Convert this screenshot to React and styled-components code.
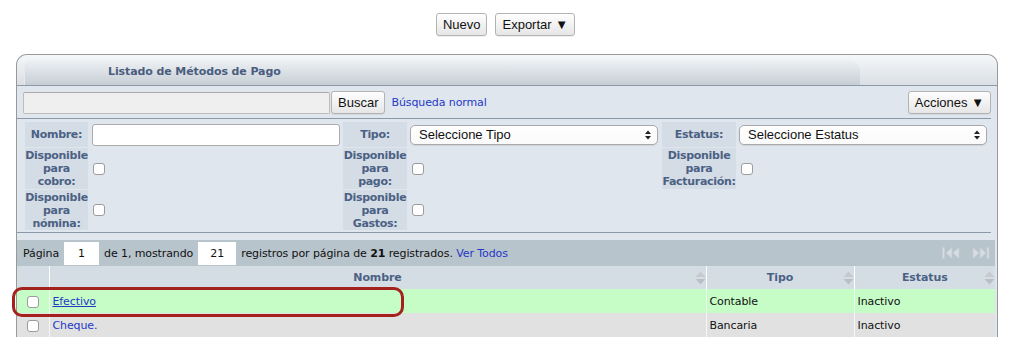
import React from 'react';
import styled, { createGlobalStyle } from 'styled-components';

const Global = createGlobalStyle`
  html, body { margin: 0; padding: 0; background: #fff; }
  body { font-family: "DejaVu Sans", Verdana, sans-serif; font-size: 11px; color: #111; letter-spacing: -0.1px; }
  * { box-sizing: border-box; }
`;

const TopBar = styled.div`
  display: flex;
  justify-content: center;
  gap: 8px;
  padding-top: 13px;
`;

const Btn = styled.button`
  font-family: "Liberation Sans", Arial, sans-serif;
  font-size: 13px;
  letter-spacing: 0;
  color: #111;
  height: 23px;
  padding: 0 6px;
  border: 1px solid #b3b3b3;
  border-radius: 3px;
  background: linear-gradient(#fefefe, #e6e6e6);
  box-shadow: 0 1px 0 rgba(0, 0, 0, 0.06);
  line-height: 21px;
  white-space: nowrap;
  cursor: pointer;
  margin: 0;
  margin-left: ${p => (p.$push ? 'auto' : '0')};
`;

const Panel = styled.section`
  margin: 18px 13px 0 16px;
  border: 1px solid #999;
  border-bottom: none;
  border-radius: 11px 11px 0 0;
  background: #dfe6ee;
`;

const PanelHeader = styled.div`
  height: 31px;
  display: flex;
  align-items: flex-end;
  padding-left: 8px;
  border-radius: 10px 10px 0 0;
  background: linear-gradient(#f5f7f9, #dadfe4);
  border-bottom: 1px solid #8c99a7;
`;

const Tab = styled.div`
  width: 835px;
  height: 25px;
  border-radius: 7px 11px 0 0;
  background: linear-gradient(#eef1f4, #c6ced5);
  box-shadow: -1px 0 0 #e6eaee;
  padding-left: 83px;
  padding-bottom: 2px;
  display: flex;
  align-items: center;
  font-weight: bold;
  color: #4a5d7e;
`;

const SearchBar = styled.div`
  display: flex;
  align-items: center;
  margin-right: 6px;
  padding: 5px 0 4px 6px;
  border-bottom: 1px solid #8a98a8;
`;

const SearchInput = styled.input`
  width: 307px;
  height: 22px;
  border: 1px solid #bcbcbc;
  border-top-color: #a9a9a9;
  border-radius: 2px;
  background: #efefef;
  margin: 0 1px 0 0;
`;

const Link = styled.a`
  color: #2538c6;
  text-decoration: ${p => (p.$underline ? 'underline' : 'none')};
  margin-left: ${p => p.$ml || 0}px;
  cursor: pointer;
`;

const Filters = styled.div`
  display: grid;
  grid-template-columns: 63px 251px 64px 251px 74px 252px;
  grid-template-rows: 25px 41px 40px;
  gap: 1px 2px;
  padding: 3px 6px 2px 8px;
  margin-right: 6px;
  border-bottom: 1px solid #8a98a8;
`;

const Label = styled.div`
  background: #d4dce5;
  color: #4b6184;
  font-weight: bold;
  text-align: center;
  line-height: 13px;
  letter-spacing: -0.3px;
  display: flex;
  align-items: center;
  justify-content: center;
`;

const Value = styled.div`
  display: flex;
  align-items: center;
  padding-left: ${p => p.$pl ?? 2}px;
`;

const TextInput = styled.input`
  width: 248px;
  height: 22px;
  border: 1px solid #ababab;
  border-radius: 3px;
  background: #fff;
  margin: 0;
`;

const Select = styled.div`
  display: flex;
  align-items: center;
  justify-content: space-between;
  width: 248px;
  height: 20px;
  border: 1px solid #a9a9a9;
  border-radius: 5px;
  background: linear-gradient(#fff, #fafafa);
  box-shadow: 0 1px 1px rgba(0, 0, 0, 0.08);
  padding: 0 6px 0 8px;
  font-family: "Liberation Sans", Arial, sans-serif;
  font-size: 13px;
  letter-spacing: 0;
  color: #111;
`;

const Check = styled.input.attrs({ type: 'checkbox' })`
  appearance: none;
  -webkit-appearance: none;
  width: 12px;
  height: 12px;
  margin: 0 0 0 ${p => p.$ml ?? 1}px;
  border: 1px solid #9c9c9c;
  border-radius: 3px;
  background: #fff;
`;

const GridWrap = styled.div`
  position: relative;
  margin: 7px 2px 0 0;
`;

const Pager = styled.div`
  height: 26px;
  background: #b8c4cc;
  display: flex;
  align-items: center;
  gap: 5px;
  padding: 0 5px 0 6px;
  white-space: nowrap;
`;

const PageBox = styled.input`
  width: ${p => p.$w}px;
  height: 23px;
  border: none;
  background: #fff;
  text-align: center;
  font-family: "DejaVu Sans", Verdana, sans-serif;
  font-size: 11px;
  color: #111;
  margin: 0;
  padding: 0;
`;

const NavIcons = styled.div`
  margin-left: auto;
  display: flex;
  gap: 12px;
  align-items: center;
`;

const Table = styled.table`
  width: 100%;
  border-collapse: collapse;
  table-layout: fixed;
`;

const Th = styled.th`
  height: 23px;
  padding: 0;
  background: #d5dde4;
  color: #4b6184;
  font-weight: bold;
  font-size: 11px;
  border-right: 1px solid #fff;
  &:last-child { border-right: none; }
`;

const ThInner = styled.div`
  display: grid;
  grid-template-columns: 11px 1fr 11px;
  align-items: center;
  text-align: center;
`;

const Tr = styled.tr`
  background: ${p => (p.$highlight ? '#c6fcc6' : '#e1e1e1')};
`;

const Td = styled.td`
  height: 24px;
  padding: 0 0 0 ${p => (p.$center ? 0 : 3)}px;
  text-align: ${p => (p.$center ? 'center' : 'left')};
  border-right: 1px solid rgba(255, 255, 255, 0.7);
  white-space: nowrap;
  &:last-child { border-right: none; }
`;

const RowCheck = styled(Check)`
  margin: 0;
  vertical-align: middle;
`;

const Annotation = styled.div`
  position: absolute;
  left: -5px;
  top: 47px;
  width: 392px;
  height: 30px;
  border: 3px solid #a3221d;
  border-radius: 10px;
  pointer-events: none;
`;

const SelArrows = () => (
  <svg width="6" height="10" viewBox="0 0 6 10">
    <polygon points="0,4 3,0.5 6,4" fill="#222" />
    <polygon points="0,6 6,6 3,9.5" fill="#222" />
  </svg>
);

const SortIcon = () => (
  <svg width="11" height="14" viewBox="0 0 11 14">
    <polygon points="0.5,6 5.5,0.5 10.5,6" fill="#c4cad0" />
    <polygon points="0.5,8 10.5,8 5.5,13.5" fill="#b9bfc5" />
  </svg>
);

const FirstIcon = () => (
  <svg width="18" height="12" viewBox="0 0 18 12">
    <rect x="0.5" y="0.5" width="2" height="11" fill="#d7dde3" stroke="#c3cbd2" strokeWidth="0.6" />
    <polygon points="10,0.5 4,6 10,11.5" fill="#d7dde3" stroke="#c3cbd2" strokeWidth="0.8" />
    <polygon points="17,0.5 11,6 17,11.5" fill="#d7dde3" stroke="#c3cbd2" strokeWidth="0.8" />
  </svg>
);

const LastIcon = () => (
  <svg width="18" height="12" viewBox="0 0 18 12">
    <polygon points="1,0.5 7,6 1,11.5" fill="#d7dde3" stroke="#c3cbd2" strokeWidth="0.8" />
    <polygon points="8,0.5 14,6 8,11.5" fill="#d7dde3" stroke="#c3cbd2" strokeWidth="0.8" />
    <rect x="15" y="0.5" width="2" height="11" fill="#d7dde3" stroke="#c3cbd2" strokeWidth="0.6" />
  </svg>
);

const rows = [
  { nombre: 'Efectivo', tipo: 'Contable', estatus: 'Inactivo', highlight: true },
  { nombre: 'Cheque.', tipo: 'Bancaria', estatus: 'Inactivo', highlight: false },
];

export default function App() {
  return (
    <>
      <Global />
      <TopBar>
        <Btn>Nuevo</Btn>
        <Btn>Exportar ▼</Btn>
      </TopBar>
      <Panel>
        <PanelHeader>
          <Tab>Listado de Métodos de Pago</Tab>
        </PanelHeader>
        <SearchBar>
          <SearchInput />
          <Btn>Buscar</Btn>
          <Link $ml={6}>Búsqueda normal</Link>
          <Btn $push>Acciones ▼</Btn>
        </SearchBar>
        <Filters>
          <Label>Nombre:</Label>
          <Value><TextInput /></Value>
          <Label>Tipo:</Label>
          <Value $pl={1}><Select>Seleccione Tipo<SelArrows /></Select></Value>
          <Label>Estatus:</Label>
          <Value $pl={1}><Select>Seleccione Estatus<SelArrows /></Select></Value>

          <Label>Disponible para cobro:</Label>
          <Value><Check /></Value>
          <Label>Disponible para pago:</Label>
          <Value><Check /></Value>
          <Label>Disponible para Facturación:</Label>
          <Value><Check /></Value>

          <Label>Disponible para nómina:</Label>
          <Value><Check /></Value>
          <Label>Disponible para Gastos:</Label>
          <Value><Check /></Value>
          <div />
          <div />
        </Filters>
        <GridWrap>
          <Pager>
            <span>Página</span>
            <PageBox $w={35} defaultValue="1" readOnly />
            <span>de 1, mostrando</span>
            <PageBox $w={38} defaultValue="21" readOnly />
            <span>
              registros por página de <b>21</b> registrados. <Link>Ver Todos</Link>
            </span>
            <NavIcons>
              <FirstIcon />
              <LastIcon />
            </NavIcons>
          </Pager>
          <Table>
            <colgroup>
              <col style={{ width: 32 }} />
              <col style={{ width: 657 }} />
              <col style={{ width: 148 }} />
              <col />
            </colgroup>
            <thead>
              <tr>
                <Th />
                <Th><ThInner><span /><span>Nombre</span><SortIcon /></ThInner></Th>
                <Th><ThInner><span /><span>Tipo</span><SortIcon /></ThInner></Th>
                <Th><ThInner><span /><span>Estatus</span><SortIcon /></ThInner></Th>
              </tr>
            </thead>
            <tbody>
              {rows.map(r => (
                <Tr key={r.nombre} $highlight={r.highlight}>
                  <Td $center><RowCheck /></Td>
                  <Td><Link $underline={r.highlight}>{r.nombre}</Link></Td>
                  <Td>{r.tipo}</Td>
                  <Td>{r.estatus}</Td>
                </Tr>
              ))}
            </tbody>
          </Table>
          <Annotation />
        </GridWrap>
      </Panel>
    </>
  );
}
